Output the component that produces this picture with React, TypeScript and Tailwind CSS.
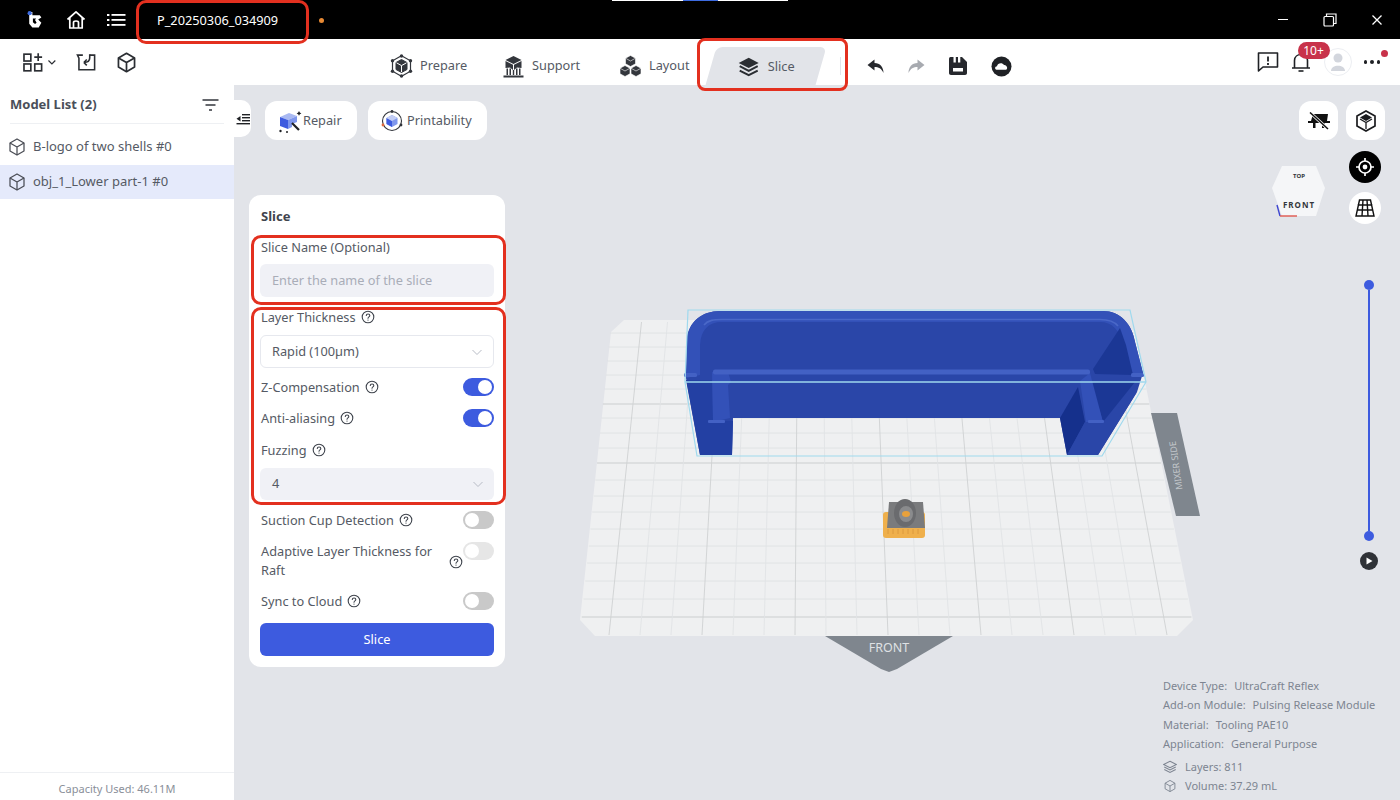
import React from "react";

const FONT = { fontFamily: '"Noto Sans", "Liberation Sans", sans-serif' };

function Cube({ s = 20, c = "#4a4d55", w = 1.5 }: { s?: number; c?: string; w?: number }) {
  return (
    <svg width={s} height={s} viewBox="0 0 20 20" fill="none" stroke={c} strokeWidth={w} strokeLinejoin="round">
      <path d="M10 2 L17 6 V14 L10 18 L3 14 V6 Z" />
      <path d="M3 6 L10 10 L17 6 M10 10 V18" />
    </svg>
  );
}

function Help({ className = "" }: { className?: string }) {
  return (
    <svg className={className} width="14" height="14" viewBox="0 0 14 14" fill="none" stroke="#3f444d" strokeWidth="1.1">
      <circle cx="7" cy="7" r="5.8" />
      <path d="M5.3 5.5 C5.3 3.4 8.8 3.4 8.8 5.5 C8.8 6.9 7 6.8 7 8.3" strokeLinecap="round" />
      <circle cx="7" cy="10.1" r="0.6" fill="#3f444d" stroke="none" />
    </svg>
  );
}

function Toggle({ on, faded }: { on?: boolean; faded?: boolean }) {
  return (
    <span
      className={`relative -mr-[1px] block h-[18px] w-[31px] shrink-0 rounded-full ${on ? "bg-[#3d5bdf]" : faded ? "bg-[#e6e6e6]" : "bg-[#c9c9c9]"}`}
    >
      <span className={`absolute top-[2px] block h-[14px] w-[14px] rounded-full bg-white ${on ? "right-[2px]" : "left-[2px]"}`} />
    </span>
  );
}

function Chevron() {
  return (
    <svg width="12" height="12" viewBox="0 0 12 12" fill="none" stroke="#b8bcc6" strokeWidth="1">
      <path d="M1.5 4 L6 8.5 L10.5 4" />
    </svg>
  );
}

function Logo() {
  return (
    <svg width="17" height="19" viewBox="0 0 16 18">
      <path d="M3 2 H6 V5 H13 L14.5 7 L11.5 9 L14.5 12 L12 16.5 H6 L3 13 Z" fill="#fff" />
      <path d="M6.5 8 H9.5 L8.5 9.5 L10 12 L8.5 13.3 L6.5 11.5 Z" fill="#000" />
      <circle cx="3.4" cy="3" r="2" fill="#3d6be0" />
    </svg>
  );
}

function HomeIcon() {
  return (
    <svg width="20" height="20" viewBox="0 0 20 20" fill="none" stroke="#fff" strokeWidth="1.7" strokeLinejoin="round">
      <path d="M1.5 9.5 L10 1.8 L18.5 9.5 M3.8 8 V18 H16.2 V8" />
      <path d="M7.5 18 V12.5 C7.5 10.5 12.5 10.5 12.5 12.5 V18" />
    </svg>
  );
}

function ListIcon() {
  return (
    <svg width="19" height="14" viewBox="0 0 19 14" fill="#fff">
      <rect x="0" y="1" width="2.4" height="2" />
      <rect x="0" y="6" width="2.4" height="2" />
      <rect x="0" y="11" width="2.4" height="2" />
      <rect x="4.5" y="1" width="14" height="1.8" />
      <rect x="4.5" y="6" width="14" height="1.8" />
      <rect x="4.5" y="11" width="14" height="1.8" />
    </svg>
  );
}

function Prepare() {
  return (
    <svg width="23" height="24" viewBox="0 0 23 24" fill="none" stroke="#33363c">
      <path d="M11.5 1.8 L20.5 6.8 V17.2 L11.5 22.2 L2.5 17.2 V6.8 Z" strokeWidth="1.2" />
      <path d="M11.5 5.5 L17 8.5 V15.5 L11.5 18.5 L6 15.5 V8.5 Z" fill="#33363c" strokeWidth="1" />
      <path d="M6.5 8.8 L11.5 11.6 L16.5 8.8 M11.5 11.6 V18" stroke="#fff" strokeWidth="1" />
      <g fill="#33363c" stroke="none">
        <circle cx="11.5" cy="2" r="1.7" /><circle cx="20.5" cy="6.8" r="1.7" /><circle cx="20.5" cy="17.2" r="1.7" />
        <circle cx="11.5" cy="22" r="1.7" /><circle cx="2.5" cy="17.2" r="1.7" /><circle cx="2.5" cy="6.8" r="1.7" />
      </g>
    </svg>
  );
}

function Support() {
  return (
    <svg width="21" height="23" viewBox="0 0 21 23">
      <path d="M10.5 1 L18.5 5 L10.5 9 L2.5 5 Z" fill="#33363c" />
      <path d="M2.5 6 L10 9.8 V15 L7 12.5 L2.5 13 Z M18.5 6 L11 9.8 V15 L14 12.5 L18.5 13 Z" fill="#33363c" />
      <path d="M3.5 13.5 H5 V20 H3.5 Z M6.5 13.5 H8 V20 H6.5 Z M9.8 15 H11.2 V20 H9.8 Z M13 13.5 H14.5 V20 H13 Z M16 13.5 H17.5 V20 H16 Z" fill="#33363c" />
      <rect x="0.5" y="20.5" width="20" height="2" fill="#33363c" />
    </svg>
  );
}

function Layout() {
  return (
    <svg width="23" height="22" viewBox="0 0 23 22" fill="#33363c" stroke="#fff" strokeWidth="0.6">
      <path d="M11.5 0.5 L16.5 3.2 V8.8 L11.5 11.5 L6.5 8.8 V3.2 Z" />
      <path d="M6 10.5 L11 13.2 V18.8 L6 21.5 L1 18.8 V13.2 Z" />
      <path d="M17 10.5 L22 13.2 V18.8 L17 21.5 L12 18.8 V13.2 Z" />
      <path d="M6.5 3.2 L11.5 6 L16.5 3.2 M1 13.2 L6 16 L11 13.2 M12 13.2 L17 16 L22 13.2" fill="none" />
    </svg>
  );
}

function SliceIcon() {
  return (
    <svg width="22" height="20" viewBox="0 0 22 20" fill="none" stroke="#2b2e33" strokeWidth="2">
      <path d="M11 0.8 L21 6 L11 11 L1 6 Z" fill="#2b2e33" stroke="none" />
      <path d="M2 9.2 L11 13.8 L20 9.2" />
      <path d="M2 13.6 L11 18.2 L20 13.6" />
    </svg>
  );
}

function Arrow({ flip, color }: { flip?: boolean; color: string }) {
  return (
    <svg width="20" height="16" viewBox="0 0 20 16" fill={color} className={flip ? "-scale-x-100" : ""}>
      <path d="M8.5 1.5 L1.5 7 L8.5 12.5 V9 C12.5 9 15.5 10.5 17.5 15 C17.5 9 14 5 8.5 5 Z" />
    </svg>
  );
}

function Save() {
  return (
    <svg width="20" height="20" viewBox="0 0 20 20">
      <path d="M2.5 1 H14 L19 6 V17 C19 18.2 18.2 19 17 19 H3 C1.8 19 1 18.2 1 17 V3 C1 1.8 1.6 1 2.5 1 Z" fill="#26282d" />
      <path d="M5.5 1 H7.8 V6.5 H5.5 Z M10 1 H12.3 V6.5 H10 Z" fill="#fff" />
      <rect x="5" y="12" width="10" height="3.5" fill="#fff" />
    </svg>
  );
}

function CloudIcon() {
  return (
    <svg width="21" height="21" viewBox="0 0 21 21">
      <circle cx="10.5" cy="10.5" r="10" fill="#1f2125" />
      <path d="M5.5 13.8 C3.6 13.5 3.6 10.5 6 10.3 C6.4 7 11.2 6 13 9 C16 8.6 17.4 13.3 14.8 13.8 Z" fill="#fff" />
    </svg>
  );
}

function RepairIcon() {
  return (
    <svg width="24" height="24" viewBox="0 0 24 24">
      <path d="M2 8 L11 4 L19 7 L10 11 Z" fill="#a9b9f2" />
      <path d="M2 8 L10 11 V20 L2 17 Z" fill="#3d5bdf" />
      <path d="M10 11 L19 7 V13 L14 15 V18 L10 20 Z" fill="#7f97ec" />
      <path d="M14 14 L21 21" stroke="#1f2125" strokeWidth="2.2" />
      <path d="M21 2 l0.8 1.6 1.6 0.8 -1.6 0.8 -0.8 1.6 -0.8 -1.6 -1.6 -0.8 1.6 -0.8 Z" fill="#1f2125" />
      <circle cx="2.5" cy="22" r="1.2" fill="#1f2125" />
      <circle cx="9" cy="23" r="1" fill="#1f2125" />
    </svg>
  );
}

function PrintIcon() {
  return (
    <svg width="24" height="24" viewBox="0 0 24 24" fill="none">
      <circle cx="12" cy="12" r="9.5" stroke="#30333a" strokeWidth="1.1" />
      <path d="M12 6 L17.5 9 V15 L12 18 L6.5 15 V9 Z" fill="#7f97ec" />
      <path d="M6.5 9 L12 12 V18 L6.5 15 Z" fill="#3d5bdf" />
      <path d="M6.5 9 L12 6 L17.5 9 L12 12 Z" fill="#c3cef6" />
      <circle cx="12" cy="2.5" r="1.4" fill="#30333a" />
      <circle cx="3" cy="16" r="1.4" fill="#e0663a" />
      <circle cx="21" cy="16" r="1.4" fill="#30333a" />
    </svg>
  );
}

function Scene() {
  const rows = [333, 347, 361, 375, 389, 404, 418, 433, 448, 463, 480, 496, 512, 529, 546, 563, 581, 599, 617];
  const dark = [404, 463, 617];
  const edge = (y: number) => {
    const t = (y - 322) / 313;
    return [611 - 31 * t, 1133 + 62 * t];
  };
  const cols = Array.from({ length: 19 }, (_, k) => k - 9);
  return (
    <svg className="absolute inset-0" width="1166" height="715" viewBox="234 85 1166 715">
      <polygon points="624,320 1122,320 1135,332 1193,620 1177,636 595,636 580,620 611,332" fill="#eff0f1" />
      {rows.map((y) => {
        const [a, b] = edge(y);
        return (
          <line key={y} x1={a} y1={y} x2={b} y2={y} stroke={dark.includes(y) ? "#cbcdcf" : "#dfe1e3"} strokeWidth={dark.includes(y) ? 1.1 : 0.9} />
        );
      })}
      {cols.map((i) => (
        <line key={i} x1={875.5 + 26 * i} y1={322} x2={888 + 31 * i} y2={635} stroke={i % 3 === 0 ? "#cfd1d3" : "#e1e3e5"} strokeWidth="0.9" />
      ))}

      <polygon points="825,636 953,636 897,669 889,672 881,669" fill="#7f868e" />
      <text x="889" y="652" textAnchor="middle" fontSize="12.5" fill="#dfe1e4" style={FONT}>FRONT</text>
      <polygon points="1151,413 1177,413 1200,516 1176,516" fill="#7f868e" />
      <text x="0" y="0" textAnchor="middle" fontSize="9" fill="#c4c8cc" transform="translate(1179,465) rotate(-98)" style={FONT}>MIXER SIDE</text>

      {/* blue part */}
      <path d="M686,378 L687,340 C688,322 702,311 720,311 L1103,311 C1120,311 1132,324 1135,342 L1143,373 L1137,392 L1098,455 L1067,455 L1060,418 L733,418 L732,455 L700,455 Z" fill="#2a46a8" />
      <path d="M686,378 L687,340 C688,322 702,311 720,311 L1103,311 C1120,311 1132,324 1135,342 L1143,373 L1133,375 L1123,345 C1120,330 1112,322 1100,322 L722,322 C708,322 701,330 700,345 L700,375 Z" fill="#3351b8" />
      <path d="M704,325 C708,320 714,319.5 722,319.5 L1100,319.5 C1108,319.5 1114,321 1118,326" fill="none" stroke="#4a68c8" strokeWidth="1.6" />
      <polygon points="1120,328 1093,369 1095,374 1133,375 1126,345" fill="#1b3795" />
      <polygon points="1078,387 1060,418 1067,455 1085,422" fill="#15308c" />
      <polygon points="1135,382 1103,422 1091,382" fill="#1b3795" />
      <polygon points="1103,422 1085,422 1067,455 1098,455 1137,392" fill="#2a46a8" />
      <polygon points="686,380 712,380 713,421 733,421 732,455 700,455" fill="#2340a3" />
      <polygon points="712,372 728,372 731,382 728,385 730,418 713,422" fill="#3351b8" />
      <polygon points="1080,381 1090,373 1103,422 1086,422" fill="#3351b8" />
      <rect x="713" y="369.5" width="377" height="5" rx="2" fill="#4361c4" />
      <rect x="684" y="373" width="13" height="4" rx="1.5" fill="#4361c4" />
      <rect x="1131" y="373" width="13" height="4" rx="1.5" fill="#4361c4" />
      <rect x="708" y="420" width="17" height="3" rx="1" fill="#4361c4" />
      <rect x="1088" y="420" width="16" height="3" rx="1" fill="#4361c4" />
      <g fill="none" stroke="#9fd9ee" strokeWidth="1.2">
        <polygon points="688,310 1130,310 1146,382 1102,456 697,456 685,382" />
        <line x1="685" y1="382" x2="1146" y2="382" strokeWidth="1.4" />
      </g>

      {/* small part */}
      <rect x="883" y="512" width="42" height="26" rx="3" fill="#efb04c" />
      <g stroke="#d8953a" strokeWidth="0.8">
        {[888, 893, 898, 903, 908, 913, 918].map((x) => (
          <line key={x} x1={x} y1={529} x2={x} y2={534} />
        ))}
      </g>
      <polygon points="889,502 923,502 925,528 887,528" fill="#7a7b7d" />
      <ellipse cx="905" cy="513" rx="11" ry="14" fill="#6a6b6e" />
      <ellipse cx="906" cy="514" rx="7" ry="8" fill="#8a8b8d" />
      <ellipse cx="906" cy="514" rx="4" ry="3" fill="#e8a13c" />

      {/* view cube */}
      <polygon points="1282,166 1316,166 1325,188 1316,216 1282,216 1272,188" fill="#f5f6f8" />
      <text x="1299" y="178" textAnchor="middle" fontSize="6" fontWeight="700" fill="#33363c" style={FONT}>TOP</text>
      <text x="1299" y="208" textAnchor="middle" fontSize="8" fontWeight="700" letterSpacing="1" fill="#33363c" style={FONT}>FRONT</text>
      <line x1="1277" y1="205" x2="1280" y2="216" stroke="#3d45d0" strokeWidth="1.4" />
      <line x1="1280" y1="216" x2="1297" y2="216" stroke="#e0564e" strokeWidth="1.4" />
    </svg>
  );
}

function LabelRow({ label, toggle }: { label: string; toggle?: React.ReactNode }) {
  return (
    <div className="flex h-[18px] items-center justify-between">
      <span className="flex items-center gap-[5px] text-[12.75px] leading-[18px] text-[#555a64]">
        {label}
        <Help />
      </span>
      {toggle}
    </div>
  );
}

export default function App() {
  const info = [
    ["Device Type:", "UltraCraft Reflex"],
    ["Add-on Module:", "Pulsing Release Module"],
    ["Material:", "Tooling PAE10"],
    ["Application:", "General Purpose"],
  ];
  return (
    <div className="relative flex h-screen w-full flex-col overflow-hidden bg-white" style={FONT}>
      {/* title bar */}
      <div className="relative flex h-[39px] shrink-0 items-center bg-black text-white">
        <div className="absolute left-[612px] top-0 flex h-px w-[176px] bg-white">
          <div className="ml-[71px] h-px w-[35px] bg-[#3d6be0]" />
        </div>
        <div className="ml-[26px] flex items-center">
          <Logo />
          <span className="ml-[23px]"><HomeIcon /></span>
          <span className="ml-[21px]"><ListIcon /></span>
        </div>
        <span className="ml-[31px] mt-[2px] w-[162px] text-[12.75px]">P_20250306_034909</span>
        <span className="mt-[2px] h-[5px] w-[5px] rounded-full bg-[#e88a34]" />
        <div className="ml-auto flex items-center pr-[17px]">
          <span className="h-[1.5px] w-[10px] bg-white" />
          <svg className="ml-[35px]" width="14" height="14" viewBox="0 0 14 14" fill="none" stroke="#fff" strokeWidth="1.2">
            <rect x="1" y="3.5" width="9.5" height="9.5" rx="1" />
            <path d="M3.5 3.5 V1 H13 V10.5 H10.5" />
          </svg>
          <svg className="ml-[34px]" width="12" height="12" viewBox="0 0 12 12" stroke="#fff" strokeWidth="1.3">
            <path d="M1.5 1.5 L10.5 10.5 M10.5 1.5 L1.5 10.5" />
          </svg>
        </div>
      </div>

      {/* tool bar */}
      <div className="relative flex h-[46px] shrink-0 items-center bg-white text-[13px] text-[#555a64]">
        <div className="ml-[23px] flex w-[115px] shrink-0 items-center">
          <svg width="20" height="20" viewBox="0 0 20 20" fill="none" stroke="#2b2e33" strokeWidth="1.7">
            <rect x="1" y="2" width="7" height="7" /><rect x="1" y="12" width="7" height="7" /><rect x="12" y="12" width="7" height="7" />
            <path d="M15.5 1 V9 M11.5 5 H19.5" />
          </svg>
          <svg className="ml-[4px]" width="10" height="10" viewBox="0 0 10 10" fill="none" stroke="#2b2e33" strokeWidth="1.2"><path d="M1.5 3.5 L5 7 L8.5 3.5" /></svg>
          <svg className="ml-[20px]" width="20" height="20" viewBox="0 0 20 20" fill="none" stroke="#2b2e33" strokeWidth="1.6">
            <path d="M7 3 H1.5 L3 6 V18 H19 V3 H14" />
            <path d="M14 2 V6 C14 9 12 10.5 8 10.5 M8 10.5 L11 7.5 M8 10.5 L11 13.5" />
          </svg>
          <span className="ml-[19px]"><Cube s={23} c="#2b2e33" w={1.5} /></span>
        </div>
        <div className="ml-[252px] mt-[8px] flex shrink-0 items-center">
          <Prepare /><span className="ml-[7px] w-[46px] text-[12.75px]">Prepare</span>
          <span className="ml-[37px]"><Support /></span><span className="ml-[8px] w-[48px] text-[12.75px]">Support</span>
          <span className="ml-[39px]"><Layout /></span><span className="ml-[7px] w-[40px] text-[12.75px]">Layout</span>
        </div>
        <div className="ml-[22px] flex h-[38px] w-[110px] shrink-0 -skew-x-[16deg] items-center self-end rounded-t-[6px] bg-[#e2e4e9]">
          <div className="ml-[27px] mt-[1px] flex skew-x-[16deg] items-center">
            <SliceIcon /><span className="ml-[8px] text-[12.75px]">Slice</span>
          </div>
        </div>
        <div className="ml-[19px] mt-[8px] h-[18px] w-px bg-[#e2e4e9]" />
        <div className="ml-[25px] mt-[8px] flex items-center">
          <Arrow color="#26282d" />
          <span className="ml-[20px]"><Arrow flip color="#a7aab0" /></span>
          <span className="ml-[22px]"><Save /></span>
          <span className="ml-[23px]"><CloudIcon /></span>
        </div>
        <div className="ml-auto mr-[20px] flex items-center">
          <svg width="22" height="22" viewBox="0 0 22 22" fill="none" stroke="#1f2125" strokeWidth="1.6">
            <path d="M1.5 2 H20.5 V16 H6 L1.5 20 Z" strokeLinejoin="round" />
            <path d="M11 5.5 V10.5 M11 12 V14" strokeWidth="1.8" />
          </svg>
          <div className="relative ml-[12px]">
            <svg width="20" height="22" viewBox="0 0 20 22" fill="none" stroke="#1f2125" strokeWidth="1.6">
              <path d="M1 17 H19 M3.5 17 V9.5 C3.5 1.5 16.5 1.5 16.5 9.5 V17" />
              <path d="M7.5 20 H12.5" />
            </svg>
            <span className="absolute -top-[9px] left-[7px] flex h-[17px] w-[32px] items-center justify-center rounded-full bg-[#c8324a] text-[12px] text-white">10+</span>
          </div>
          <div className="ml-[13px] flex h-[28px] w-[28px] items-center justify-center rounded-full border border-[#eceef2] bg-white">
            <svg width="16" height="20" viewBox="0 0 16 20" fill="#d3d6dd"><circle cx="8" cy="6" r="4.5" /><path d="M1 19 C1 12 15 12 15 19 Z" /></svg>
          </div>
          <div className="relative ml-[12px] flex gap-[3px]">
            <span className="h-[3.5px] w-[3.5px] rounded-full bg-[#1f2125]" />
            <span className="h-[3.5px] w-[3.5px] rounded-full bg-[#1f2125]" />
            <span className="h-[3.5px] w-[3.5px] rounded-full bg-[#1f2125]" />
            <span className="absolute -right-[8px] -top-[10px] h-[7px] w-[7px] rounded-full bg-[#c8324a]" />
          </div>
        </div>
      </div>

      <div className="flex min-h-0 flex-1">
        {/* sidebar */}
        <aside className="flex w-[234px] shrink-0 flex-col bg-white">
          <div className="mx-[10px] flex h-[39px] shrink-0 items-center justify-between border-b border-[#eef0f3] pt-[2px]">
            <span className="text-[13px] font-bold text-[#4a4f59]">Model List (2)</span>
            <svg className="mr-[5px]" width="17" height="12" viewBox="0 0 17 12" stroke="#33363c" strokeWidth="1.4"><path d="M0.5 1 H16.5 M3.5 6 H13.5 M7 11 H10" /></svg>
          </div>
          <div className="mt-[4px] flex h-[37px] items-center gap-[6px] pl-[7px] text-[13px] text-[#555a64]"><Cube s={20} w={1.25} />B-logo of two shells #0</div>
          <div className="flex h-[34px] items-center gap-[6px] bg-[#e5eafb] pl-[7px] text-[13px] text-[#555a64]"><Cube s={20} w={1.25} />obj_1_Lower part-1 #0</div>
          <div className="mt-auto flex h-[28px] items-center justify-center border-t border-[#eef0f3] pt-[6px] text-[11px] text-[#8a8f99]">Capacity Used: 46.11M</div>
        </aside>

        {/* main canvas */}
        <main className="relative min-w-0 flex-1 overflow-hidden bg-[#e2e4e9]">
          <Scene />
          <div className="relative flex flex-col pl-[15px] pt-[16px]">
            <div className="flex items-start">
              <div className="absolute left-0 top-[15px] flex h-[37px] w-[17px] items-center justify-center rounded-r-[10px] bg-white">
                <svg width="14" height="12" viewBox="0 0 14 12" fill="#1f2125"><path d="M4.5 3 V8.5 L0.5 5.8 Z" /><rect x="6" y="1" width="8" height="1.4" /><rect x="6" y="4" width="8" height="1.4" /><rect x="6" y="7" width="8" height="1.4" /><rect x="0.5" y="10" width="13.5" height="1.4" /></svg>
              </div>
              <button className="ml-[16px] flex h-[39px] w-[92px] items-center gap-[1px] rounded-[12px] bg-white pt-[1px] pl-[13px] text-[12.75px] text-[#555a64]"><RepairIcon />Repair</button>
              <button className="ml-[11px] flex h-[39px] w-[119px] items-center gap-[3px] rounded-[12px] bg-white pt-[1px] pl-[12px] text-[12.75px] text-[#555a64]"><PrintIcon />Printability</button>
            </div>

            {/* slice panel */}
            <section className="mt-[55px] h-[472px] w-[256px] rounded-[12px] bg-white pl-[12px] pr-[12px]">
              <h2 className="pt-[12px] text-[13px] font-bold leading-[18px] text-[#3f444d]">Slice</h2>
              <div className="mt-[13px] text-[12.75px] leading-[18px] text-[#555a64]">Slice Name (Optional)</div>
              <div className="-ml-[1px] mt-[8px] flex h-[33px] w-[234px] items-center rounded-[6px] bg-[#f0f1f6] pl-[12px] text-[12.75px] text-[#a9adb8]">Enter the name of the slice</div>
              <div className="mt-[11px]"><LabelRow label="Layer Thickness" /></div>
              <div className="-ml-[1px] mt-[9px] flex h-[33px] w-[234px] items-center justify-between rounded-[6px] border border-[#e6e8ee] bg-white pl-[11px] pr-[10px] text-[12.75px] text-[#555a64]">Rapid (100µm)<Chevron /></div>
              <div className="mt-[10px]"><LabelRow label="Z-Compensation" toggle={<Toggle on />} /></div>
              <div className="mt-[13px]"><LabelRow label="Anti-aliasing" toggle={<Toggle on />} /></div>
              <div className="mt-[14px]"><LabelRow label="Fuzzing" /></div>
              <div className="-ml-[1px] mt-[9px] flex h-[32px] w-[234px] items-center justify-between rounded-[6px] bg-[#f0f1f6] pl-[12px] pr-[10px] text-[12.75px] text-[#555a64]">4<Chevron /></div>
              <div className="mt-[11px]"><LabelRow label="Suction Cup Detection" toggle={<Toggle />} /></div>
              <div className="mt-[13px] flex justify-between">
                <span className="w-[175px] text-[12.75px] leading-[19px] text-[#555a64]">Adaptive Layer Thickness for Raft</span>
                <span className="flex h-[39px] items-center"><Help className="ml-[12px]" /></span>
                <Toggle faded />
              </div>
              <div className="mt-[11px]"><LabelRow label="Sync to Cloud" toggle={<Toggle />} /></div>
              <button className="-ml-[1px] mt-[13px] h-[33px] w-[234px] rounded-[6px] bg-[#3d5bdf] text-[12.75px] text-white">Slice</button>
            </section>
          </div>

          {/* right tools */}
          <div className="absolute right-[15px] top-[16px] flex flex-col items-end">
            <div className="flex gap-[8px]">
              <span className="flex h-[39px] w-[39px] items-center justify-center rounded-[12px] bg-white">
                <svg width="24" height="18" viewBox="0 0 24 18" fill="#111"><path d="M6 2 H21 L20 9 H23 V11 H1 V9 H4 Z" /><rect x="6" y="11" width="2.5" height="5" /><rect x="15" y="11" width="2.5" height="5" /><path d="M3 0.5 L21 17" stroke="#fff" strokeWidth="3" /><path d="M3 0.5 L21 17" stroke="#111" strokeWidth="1.5" /></svg>
              </span>
              <span className="flex h-[39px] w-[39px] items-center justify-center rounded-[12px] bg-white">
                <svg width="20" height="22" viewBox="0 0 20 22" fill="none" stroke="#1a1b1e" strokeWidth="1.7"><path d="M10 1 L19 6 V16 L10 21 L1 16 V6 Z" /><path d="M10 4 L16 7.5 L10 11 L4 7.5 Z" fill="#1a1b1e" stroke="none" /><path d="M4 9 L10 12.5 L16 9 M10 12.5 V19" strokeWidth="1.3" /></svg>
              </span>
            </div>
            <span className="mr-[4px] mt-[11px] flex h-[32px] w-[32px] items-center justify-center rounded-full bg-black">
              <svg width="20" height="20" viewBox="0 0 20 20" fill="none" stroke="#fff" strokeWidth="1.7"><circle cx="10" cy="10" r="6" /><circle cx="10" cy="10" r="2.4" fill="#fff" stroke="none" /><path d="M10 1 V4 M10 16 V19 M1 10 H4 M16 10 H19" /></svg>
            </span>
            <span className="mr-[4px] mt-[9px] flex h-[32px] w-[32px] items-center justify-center rounded-full bg-white">
              <svg width="20" height="18" viewBox="0 0 20 18" fill="none" stroke="#111" strokeWidth="1.4"><path d="M4.5 1 H15.5 L19 17 H1 Z M2.6 6 H17.4 M1.7 11 H18.3 M8 1 L7 17 M12 1 L13 17" /></svg>
            </span>
            <div className="mr-[7px] mt-[56px] flex flex-col items-center">
              <span className="z-10 h-[10px] w-[10px] rounded-full bg-[#3d5bdf]" />
              <span className="h-[241px] w-[2px] bg-[#3d5bdf]" />
              <span className="z-10 h-[10px] w-[10px] rounded-full bg-[#3d5bdf]" />
              <span className="mt-[11px] flex h-[18px] w-[18px] items-center justify-center rounded-full bg-[#2f3237]">
                <svg width="8" height="8" viewBox="0 0 8 8" fill="#fff"><path d="M1.5 0.5 L7.5 4 L1.5 7.5 Z" /></svg>
              </span>
            </div>
          </div>

          {/* info */}
          <div className="absolute left-[929px] top-[591px] text-[11px] leading-[19.3px] text-[#7d8491]">
            {info.map(([k, v]) => (
              <div key={k} className="flex gap-[7px]"><span>{k}</span><span>{v}</span></div>
            ))}
            <div className="mt-[4px] flex items-center gap-[8px]">
              <svg width="14" height="14" viewBox="0 0 22 20" fill="none" stroke="#7d8491" strokeWidth="1.6"><path d="M11 1 L21 6 L11 11 L1 6 Z M2 10 L11 14.5 L20 10 M2 14 L11 18.5 L20 14" /></svg>
              Layers: 811
            </div>
            <div className="flex items-center gap-[8px]"><Cube s={14} c="#7d8491" w={1.3} />Volume: 37.29 mL</div>
            <div className="mt-[3px]"><Cube s={14} c="#7d8491" w={1.3} /></div>
          </div>
        </main>
      </div>

      {/* red annotation frames */}
      <div className="pointer-events-none absolute left-[136px] top-0 h-[44px] w-[173px] rounded-[10px] border-[3px] border-[#e3301f]" />
      <div className="pointer-events-none absolute left-[697px] top-[38px] h-[53px] w-[151px] rounded-[8px] border-[3px] border-[#e3301f]" />
      <div className="pointer-events-none absolute left-[251px] top-[235px] h-[70px] w-[255px] rounded-[10px] border-[3px] border-[#e3301f]" />
      <div className="pointer-events-none absolute left-[251px] top-[307px] h-[198px] w-[255px] rounded-[10px] border-[3px] border-[#e3301f]" />
    </div>
  );
}
